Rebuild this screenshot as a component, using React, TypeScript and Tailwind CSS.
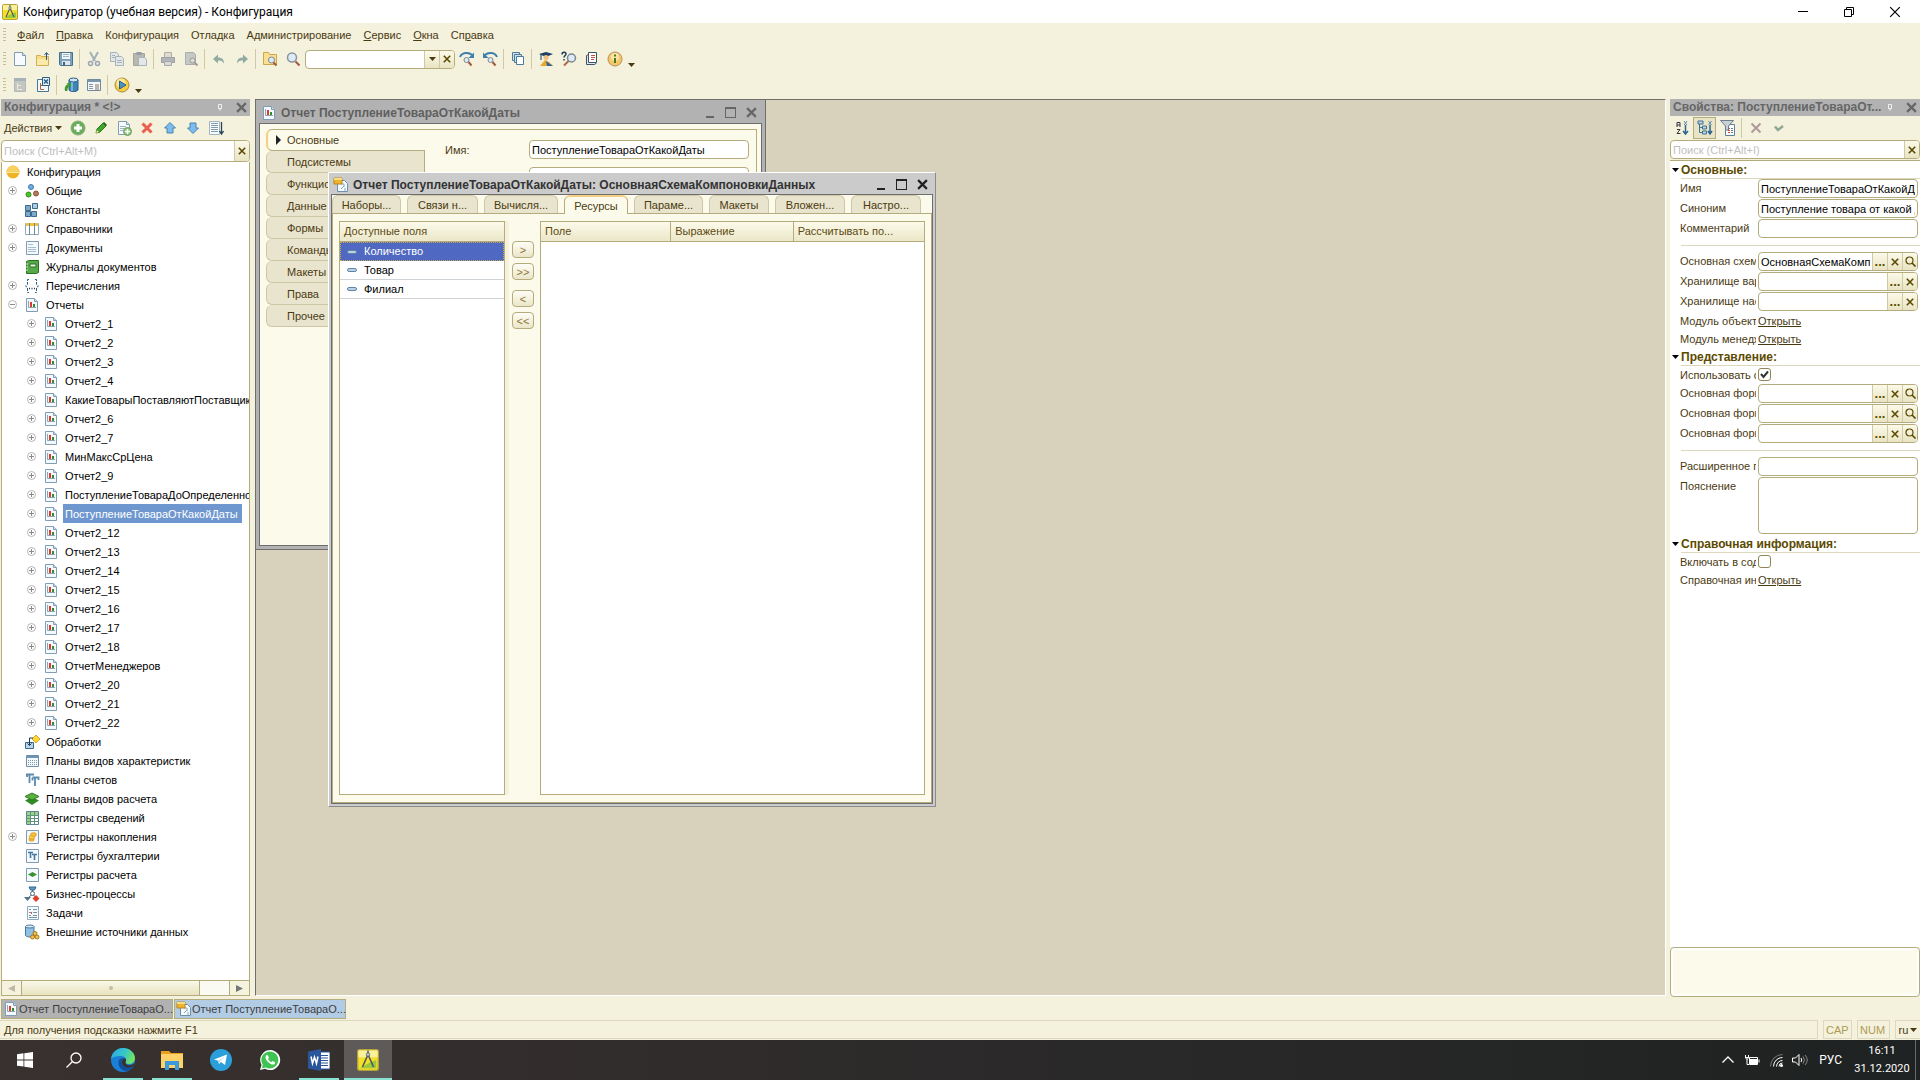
import type { ReactNode } from "react";

const font =
  "font-['Liberation_Sans',Arial,sans-serif] text-[11px] leading-[16px]";

/* ---------- icons ---------- */

type IconProps = { children: ReactNode; size?: number; view?: number };

function Svg({ children, size = 16, view = 16 }: IconProps) {
  return (
    <svg
      aria-hidden="true"
      className="block shrink-0"
      fill="none"
      height={size}
      viewBox={`0 0 ${view} ${view}`}
      width={size}
    >
      {children}
    </svg>
  );
}

function PageShape({ stroke = "#7f9cb3", fill = "#f7fbff" }) {
  return (
    <>
      <path d="M2.5 1.5h8l3 3v10h-11z" fill={fill} stroke={stroke} />
      <path d="M10.5 1.5v3h3" fill="#cfdfec" stroke={stroke} />
    </>
  );
}

const icons: Record<string, ReactNode> = {
  new: <PageShape />,
  open: (
    <>
      <path d="M1.5 4.5h4l1 1h7v9h-12z" fill="#f7dc86" stroke="#d4ae56" />
      <path d="M2 8h11v6H2z" fill="#fbe9a9" />
      <path d="M11.500 9V2M9.500 4l2-2.500 2 2.500" stroke="#2c5876" />
    </>
  ),
  save: (
    <>
      <path d="M1.500 1.500h13v13h-12l-1-1z" fill="#7ea2bd" stroke="#4a708c" />
      <path d="M4 2h8v6H4z" fill="#f3f7fa" />
      <path d="M5 3.500h6M5 5.500h6" stroke="#9db4c5" />
      <path d="M4 10h8v4H4z" fill="#dfe7ec" />
      <path d="M5 11h2v3H5z" fill="#3d6481" />
    </>
  ),
  cut: (
    <>
      <path d="M4 1l5 9M12 1L7 10" stroke="#a3b0ba" strokeWidth="2" />
      <circle cx="4.500" cy="12.500" r="2" stroke="#98a7b3" strokeWidth="1.500" />
      <circle cx="11.500" cy="12.500" r="2" stroke="#98a7b3" strokeWidth="1.500" />
    </>
  ),
  copy: (
    <>
      <path d="M1.500 1.500h6l2 2v7h-8z" fill="#e3e7e6" stroke="#a5b3bd" />
      <path d="M6.500 5.500h6l2 2v7h-8z" fill="#e3e7e6" stroke="#a5b3bd" />
      <path d="M8 9.500h5M8 11.500h5M3 4.500h3M3 6.500h3" stroke="#a5b3bd" />
    </>
  ),
  paste: (
    <>
      <path d="M1.500 2.500h11v12h-11z" fill="#b9b8ae" stroke="#a5a59d" />
      <path d="M4.500 1h5v3h-5z" fill="#93a0a8" />
      <path d="M6.500 6.500h6l2 2v6h-8z" fill="#e3e7e6" stroke="#a5b3bd" />
    </>
  ),
  print: (
    <>
      <path d="M4.500 1.500h7v5h-7z" fill="#dddcd2" stroke="#b0afa6" />
      <path d="M1.500 6.500h13v5h-13z" fill="#b3b5b6" stroke="#9ea2a5" />
      <path d="M4.500 10.500h7v4h-7z" fill="#dadbd6" stroke="#a5a8a8" />
    </>
  ),
  preview: (
    <>
      <path d="M2.500 1.500h8l2 2v10h-10z" fill="#c6c8c5" stroke="#a9adae" />
      <circle cx="9.500" cy="9.500" fill="#dadbd6" r="2.500" stroke="#9c9a97" />
      <path d="M11.500 11.500l3 3" stroke="#a79890" strokeWidth="2" />
    </>
  ),
  undo: (
    <path d="M2 8l5-4.500v3c4 0 6 2 6 6-1.500-2.500-3-3-6-3v3z" fill="#91aaa2" />
  ),
  redo: (
    <path d="M14 8L9 3.500v3c-4 0-6 2-6 6 1.500-2.500 3-3 6-3v3z" fill="#91aaa2" />
  ),
  findAll: (
    <>
      <path d="M1.500 1.500h5l1 2h7v10h-13z" fill="#f9e090" stroke="#cfa64c" />
      <circle cx="9.500" cy="9" fill="#dcebf5" r="3" stroke="#7c8795" />
      <path d="M11.500 11.500l3 3" stroke="#a3593c" strokeWidth="2" />
    </>
  ),
  find: (
    <>
      <circle cx="7" cy="6.500" fill="#dcebf5" r="4.500" stroke="#8a93a0" strokeWidth="1.500" />
      <path d="M10.500 10.500l4 4" stroke="#a3593c" strokeWidth="2" />
    </>
  ),
  findNext: (
    <>
      <path d="M1 6c2-5 9-5 12-2" stroke="#3b7fae" strokeWidth="2" />
      <path d="M15 1.500V7H9.500z" fill="#3b7fae" />
      <circle cx="7.500" cy="9" fill="#dcebf5" r="2.500" stroke="#7c8795" />
      <path d="M9.500 11l3 3.500" stroke="#a3593c" strokeWidth="2" />
    </>
  ),
  findPrev: (
    <>
      <path d="M15 6C13 1 6 1 3 4" stroke="#3b7fae" strokeWidth="2" />
      <path d="M1 1.500V7h5.500z" fill="#3b7fae" />
      <circle cx="8.500" cy="9" fill="#dcebf5" r="2.500" stroke="#7c8795" />
      <path d="M10.500 11l3 3.500" stroke="#a3593c" strokeWidth="2" />
    </>
  ),
  windows: (
    <>
      <path d="M2.500 1.500h7v8h-7z" fill="#cfe0ec" stroke="#4f7b9b" />
      <path d="M4.500 3.500h7v8h-7z" fill="#cfe0ec" stroke="#4f7b9b" />
      <path d="M6.500 5.500h7v8h-7z" fill="#fff" stroke="#4f7b9b" />
    </>
  ),
  syntax: (
    <>
      <path d="M1 3l7-2 7 2-7 3z" fill="#1d3f63" />
      <circle cx="8" cy="6.500" fill="#f0bd83" r="2.500" />
      <path d="M3 3v6" stroke="#1d3f63" />
      <path d="M2 15l5-6 4 2 4 4z" fill="#e8a62d" />
      <path d="M8 10l7 5H9z" fill="#2b6794" />
    </>
  ),
  help: (
    <>
      <circle cx="10.500" cy="7" fill="#dcebf5" r="4" stroke="#7c8795" strokeWidth="1.500" />
      <path d="M7.500 10l-4.500 4.500" stroke="#b06a4c" strokeWidth="2" />
      <path d="M1 3.500C1 .500 5 .500 5 3c0 1.500-2 1.500-2 3.500M3 8v1.500" stroke="#1f3e57" strokeWidth="1.500" />
    </>
  ),
  book: (
    <>
      <path d="M4.500 3.500l-2 1v9h8l2-1.500" fill="#dfe7ec" stroke="#3c5468" />
      <path d="M4.500 1.500h8v10h-8z" fill="#fff" stroke="#3c5468" />
      <path d="M7 4.500h4M7 6.500h4M7 8.500h3" stroke="#c94f3d" />
    </>
  ),
  info: (
    <>
      <circle cx="8" cy="8" fill="#f6c667" r="7" stroke="#b59261" />
      <circle cx="8" cy="6" fill="#fbe3a8" r="4" />
      <path d="M8 7v5M8 3.500v2" stroke="#3f7d22" strokeWidth="2" />
    </>
  ),
  treeOff: (
    <>
      <path d="M2.500 1.500h11v13h-11z" fill="#c4c6c1" stroke="#b3b8bb" />
      <path d="M2 1h12v3H2z" fill="#a8b2b9" />
      <path d="M5.500 6v6.500H10M5.500 8.500H9" stroke="#ece9dc" />
    </>
  ),
  treeOn: (
    <>
      <path d="M2.500 2.500h11v12h-11z" fill="#f3f8fb" stroke="#4b7696" />
      <path d="M5.500 6v6.500H9M5.500 8.500H8" stroke="#b4634a" />
      <path d="M7.500.500h7v8h-7z" fill="#e6eff6" stroke="#2d5f86" />
      <path d="M9 2.500l4 4m0-4l-4 4" stroke="#2d5f86" strokeWidth="1.500" />
    </>
  ),
  db: (
    <>
      <path d="M6 3v10c1.500 2 7.500 2 9 0V3z" fill="#3f86b8" stroke="#285c84" />
      <ellipse cx="10.500" cy="3" fill="#cbe3f3" rx="4.500" ry="2" stroke="#285c84" />
      <path d="M9 5v9" stroke="#8dc3e6" strokeWidth="1.500" />
      <path d="M2 14c-1-4 1-6 3-7l-2-1h5v5l-1.500-2C5 10 4 12 4.500 14z" fill="#3f9a36" />
    </>
  ),
  form: (
    <>
      <path d="M1.500 2.500h13v11h-13z" fill="#f4f7f9" stroke="#6f8b9d" />
      <path d="M2 3h12v2H2z" fill="#7897ac" />
      <path d="M3 7.500h4M3 9.500h4M3 11.500h4" stroke="#8a9aa5" />
      <path d="M9 7h4v6H9z" fill="#bdb6a8" />
    </>
  ),
  run: (
    <>
      <circle cx="8" cy="8" fill="#f9cd3e" r="7" stroke="#a88a46" />
      <circle cx="7" cy="6" fill="#fdea9b" r="4.500" />
      <path d="M5.500 4l6.500 4-6.500 4z" fill="#4b93c7" stroke="#2a618f" />
    </>
  ),
  add: (
    <>
      <circle cx="8" cy="8" fill="#67b056" r="7" stroke="#8aa884" />
      <path d="M8 4v8M4 8h8" stroke="#fff" strokeWidth="3" />
    </>
  ),
  edit: (
    <>
      <path d="M3 13l1-4 6-6 3 3-6 6z" fill="#3fa629" stroke="#2f7a20" />
      <path d="M10 3l1-1 3 3-1 1z" fill="#1e5d14" />
      <path d="M3 13l1-3 2 2z" fill="#f2dfa4" />
    </>
  ),
  addCopy: (
    <>
      <PageShape />
      <path d="M4 6.500h6M4 8.500h4M4 10.500h3" stroke="#9fb5c4" />
      <circle cx="11.500" cy="11.500" fill="#8bc47b" r="4" stroke="#6f9d63" />
      <path d="M11.500 9v5M9 11.500h5" stroke="#fff" strokeWidth="1.500" />
    </>
  ),
  remove: (
    <path d="M3.500 3.500l9 9M12.500 3.500l-9 9" stroke="#ea5f4d" strokeWidth="3" />
  ),
  up: (
    <path d="M8 2.500l5.500 5.500H11v5H5V8H2.500z" fill="#7dbcec" stroke="#4a84b0" />
  ),
  down: (
    <path d="M8 13.500L13.500 8H11V3H5v5H2.500z" fill="#7dbcec" stroke="#4a84b0" />
  ),
  sort: (
    <>
      <path d="M1.500 1.500h10v13h-10z" fill="#f7fbff" stroke="#9fb5c4" />
      <path d="M3 3.500h7M3 5.500h7M3 7.500h7M3 9.500h7M3 11.500h7" stroke="#8299a9" />
      <path d="M13.500 2v11M11.500 11l2 3 2-3" stroke="#26465c" strokeWidth="1.300" />
    </>
  ),
  root: (
    <>
      <circle cx="8" cy="8" fill="#f0b323" r="6.500" />
      <path d="M1.500 8a6.500 6.500 0 0113 0z" fill="#f7d263" />
      <path d="M1.500 8.500h13" stroke="#fbe9a0" />
    </>
  ),
  common: (
    <>
      <circle cx="7" cy="4" fill="#6fb0e6" r="2.500" stroke="#3c78ab" />
      <circle cx="4.500" cy="11.500" fill="#4fc32c" r="2.500" stroke="#2f8a18" />
      <circle cx="12" cy="10.500" fill="#b27a57" r="2.500" stroke="#8a5637" />
    </>
  ),
  constants: (
    <>
      <path d="M1.500 3.500h5v5h-5zM1.500 9.500h5v5h-5zM7.500 9.500h5v5h-5z" fill="#7ea9c9" stroke="#3b6a8f" />
      <path d="M8.500 1.500h5v5h-5z" fill="#a9cbe2" stroke="#3b6a8f" />
    </>
  ),
  catalogs: (
    <>
      <path d="M1.500 2.500h13v11h-13z" fill="#fff" stroke="#8fa9bd" />
      <path d="M2 2h12v3H2z" fill="#f2c23c" />
      <path d="M5.500 2v12M10.500 2v12" stroke="#6c8ba4" />
    </>
  ),
  documents: (
    <>
      <path d="M2.500 1.500h12v13h-12z" fill="#f3f9fd" stroke="#7f9cb3" />
      <path d="M4 4.500h5M4 7.500h8M4 9.500h8M4 11.500h8" stroke="#a5bfd1" />
    </>
  ),
  journals: (
    <>
      <path d="M2.500 2.500l2-1h10v12l-2 1h-10z" fill="#55a948" stroke="#2b7027" />
      <path d="M6 5h6v3H6z" fill="#e9f5e2" stroke="#2b7027" />
      <path d="M2 5h2M2 8h2M2 11h2" stroke="#d7efd0" />
    </>
  ),
  enums: (
    <>
      <path d="M5 1.500H3.500v5l-2 1.500 2 1.500v5H5M11 1.500h1.500v5l2 1.500-2 1.500v5H11" stroke="#315f80" strokeDasharray="3 1" />
      <path d="M5 10.500h1M7.500 10.500h1M10 10.500h1" stroke="#1d3a50" strokeWidth="1.500" />
    </>
  ),
  report: (
    <>
      <path d="M2.500 1.500h8l3 3v10h-11z" fill="#f3f9fd" stroke="#7f9db4" />
      <path d="M10.500 1.500v3h3" fill="#cfdfec" stroke="#7f9db4" />
      <path d="M4.500 4v6.500H12" stroke="#8ba3b4" />
      <path d="M6 5h2v5H6z" fill="#e0382c" />
      <path d="M9 7h2v3H9z" fill="#2c8f2c" />
    </>
  ),
  scheme: (
    <>
      <path d="M4.500 3.500h7l3 3v8h-10z" fill="#f3f9fd" stroke="#6d8fa8" />
      <path d="M8 7h3v3m1 1v3M8 12l3-3" stroke="#8ba6b8" />
      <path d="M1 1h8v6H1z" fill="#efb32c" stroke="#b98522" />
      <path d="M1 1h8v2H1z" fill="#f9dd83" />
    </>
  ),
  processing: (
    <>
      <path d="M1.500 8.500h8v6h-8z" fill="#b5d6ec" stroke="#3b6a8f" />
      <path d="M12 1l4 4-4 4-4-4z" fill="#fbd63b" stroke="#d8a51f" />
      <path d="M9 4H5.500v7M3.500 9.500l2 2 2-2" stroke="#1d3a50" />
    </>
  ),
  charTypes: (
    <>
      <path d="M2.500 2.500h12v11h-12z" fill="#f3f9fd" stroke="#6d8fa8" />
      <path d="M3 3h11v2H3z" fill="#6d94b2" />
      <path d="M4 7.500h9M4 9.500h9M4 11.500h9" stroke="#8496a3" strokeDasharray="1 1" />
    </>
  ),
  accounts: (
    <path d="M2 2.500h8M5.500 2.500V11M3 5V2M8.500 5.500h6V8M11 6v8M8.500 5.500v3" stroke="#5b8bae" strokeWidth="1.800" />
  ),
  calcTypes: (
    <>
      <path d="M8 6l7 3.500L8 14 1 9.500z" fill="#2f8a25" />
      <path d="M8 2l7 3.500L8 9 1 5.500z" fill="#5ab13f" stroke="#2c7a22" />
    </>
  ),
  infoReg: (
    <>
      <path d="M2.500 1.500h12v13h-12z" fill="#fff" stroke="#5d8299" />
      <path d="M3 2h11v3H3zM3 5h3v9H3z" fill="#9ed288" />
      <path d="M2.500 5.500h12M2.500 8.500h12M2.500 11.500h12M6.500 1.500v13M10.500 1.500v13" stroke="#5f967a" />
    </>
  ),
  accumReg: (
    <>
      <path d="M2.500 1.500h12v13h-12z" fill="#f3f9fd" stroke="#7f9cb3" />
      <ellipse cx="7.500" cy="10.500" fill="#eeb02a" rx="3" ry="2" />
      <ellipse cx="8" cy="8" fill="#f9cf4e" rx="3" ry="2" stroke="#c98a1c" strokeWidth=".5" />
      <ellipse cx="9.500" cy="5.500" fill="#f5be37" rx="3" ry="2" stroke="#c98a1c" strokeWidth=".5" />
    </>
  ),
  accountReg: (
    <>
      <path d="M2.500 1.500h12v13h-12z" fill="#f3f9fd" stroke="#7f9cb3" />
      <path d="M4 4.500h5M6.500 4.500V10M8 6.500h5M10.500 6.500V12" stroke="#42789f" strokeWidth="1.600" />
    </>
  ),
  calcReg: (
    <>
      <path d="M2.500 1.500h12v13h-12z" fill="#f3f9fd" stroke="#7f9cb3" />
      <path d="M8.500 5l4.500 2.500-4.500 2.500L4 7.500z" fill="#3b9130" />
    </>
  ),
  business: (
    <>
      <path d="M5 1h7l-1.500 3h-4z" fill="#5d9ccb" stroke="#2f668f" />
      <path d="M8.500 4v2M8.500 8L4 12M8.500 8l4 4" stroke="#506878" />
      <circle cx="8.500" cy="7.500" fill="#fff" r="2" stroke="#506878" />
      <path d="M0 11h7l-3.500 4z" fill="#51748c" />
      <path d="M12 9l3.500 3.500L12 16l-3.500-3.500z" fill="#e0402d" />
    </>
  ),
  tasks: (
    <>
      <path d="M3.500 1.500h11v13h-11z" fill="#f3f9fd" stroke="#8fa9bd" />
      <path d="M5 4.500h2M5 7.500h2M5 10.500h2M9 4.500h4M9 7.500h4M9 10.500h4M5 12.500h8" stroke="#7d909e" />
      <path d="M7.500 7v2" stroke="#d65a46" />
    </>
  ),
  external: (
    <>
      <path d="M1.500 2.500v9c1.500 2 7 2 8.500 0v-9z" fill="#8fc0e2" stroke="#47799d" />
      <ellipse cx="5.800" cy="2.500" fill="#d6eaf7" rx="4.300" ry="1.500" stroke="#47799d" />
      <circle cx="11" cy="9.500" fill="#f3c351" r="2" stroke="#a67518" />
      <circle cx="8.500" cy="13" fill="#f3c351" r="2" stroke="#a67518" />
      <circle cx="13" cy="13" fill="#f3c351" r="2" stroke="#a67518" />
    </>
  ),
  az: (
    <>
      <path d="M3 7V2.500h3V7M3 5h3M3 9.500h3l-3 4h3.500" stroke="#33373a" />
      <path d="M11.500 5v8M9 11l2.500 3 2.500-3" stroke="#2c6690" strokeWidth="1.500" />
      <path d="M10 1l3 4m0-4l-3 4" stroke="#5f8cab" />
    </>
  ),
  categories: (
    <>
      <path d="M2.500 2v10.500H5M2.500 7.500H5" stroke="#3f7396" />
      <path d="M5.500 6h4v3h-4zM5.500 11h4v3h-4zM1 1h5v3H1z" fill="#bcd3e2" stroke="#3f7396" />
      <path d="M13 5v8M11 11l2 3 2-3" stroke="#2c6690" strokeWidth="1.500" />
      <path d="M11.500 1l3 4m0-4l-3 4" stroke="#5f8cab" />
    </>
  ),
  filter: (
    <>
      <path d="M5.500 4.500h9v11h-9z" fill="#fff" stroke="#5d8299" />
      <path d="M8 8.500h2M8 10.500h2M8 12.500h2" stroke="#d5482f" />
      <path d="M11 8.500h2M11 10.500h2M11 12.500h2" stroke="#5d8299" />
      <path d="M.500.500h13L8.500 6v4h-3V6z" fill="#c9d1d6" stroke="#6b7f8c" />
    </>
  ),
  cancel: (
    <path d="M3.500 3.500l9 9M12.500 3.500l-9 9" stroke="#b09a9c" strokeWidth="2" />
  ),
  apply: <path d="M4 6.500l3 3.500 5-4" stroke="#8fa893" strokeWidth="2.500" />,
  app: (
    <>
      <rect fill="#f4df2a" height="15" rx="1.500" stroke="#b3a23a" width="15" x=".5" y=".5" />
      <path d="M1 1h14v5H1z" fill="#fbf19a" />
      <path d="M2 14l7-4 5-2v6z" fill="#9cc83c" />
      <path d="M8 1v3L4 13M8 4l4 9" stroke="#4c565f" strokeWidth="1.100" />
      <circle cx="8" cy="4" fill="#cfd5d8" r="1.200" stroke="#4c565f" strokeWidth=".6" />
    </>
  ),
};

function Icon({ name, size = 16 }: { name: string; size?: number }) {
  return <Svg size={size}>{icons[name]}</Svg>;
}

function Cross({ size = 10, className = "text-[#5c4a00]", width = 2 }) {
  return (
    <svg aria-hidden="true" className={`block shrink-0 ${className}`} height={size} viewBox="0 0 10 10" width={size}>
      <path d="M1 1l8 8M9 1L1 9" stroke="currentColor" strokeWidth={width} />
    </svg>
  );
}

function Caret({ className = "text-[#4a3a12]" }) {
  return (
    <svg aria-hidden="true" className={`block shrink-0 ${className}`} height="4" viewBox="0 0 7 4" width="7">
      <path d="M0 0h7L3.500 4z" fill="currentColor" />
    </svg>
  );
}

/* ---------- small parts ---------- */

function ToolButton({ icon, label, pressed = false }: { icon: string; label: string; pressed?: boolean }) {
  return (
    <button
      aria-label={label}
      className={`grid h-[22px] w-[23px] shrink-0 place-items-center ${
        pressed ? "border border-[#b5ac7d] bg-[#e9e4c6]" : ""
      }`}
      type="button"
    >
      <Icon name={icon} />
    </button>
  );
}

function Separator() {
  return <span className="mx-[2px] h-5 w-px shrink-0 bg-[#cfc9a4]" />;
}

function Grip() {
  return (
    <span className="mr-[2px] ml-[3px] h-[14px] w-[3px] shrink-0 bg-[repeating-linear-gradient(to_bottom,#c5be98_0px,#c5be98_1px,transparent_1px,transparent_3px)]" />
  );
}

function FieldButton({ children, label }: { children: ReactNode; label: string }) {
  return (
    <button
      aria-label={label}
      className="grid w-[15px] shrink-0 place-items-center border-l border-[#cfc9a4] bg-linear-to-b from-[#fbfae9] to-[#e9e4c3] text-[13px] font-bold text-[#5c4a00]"
      type="button"
    >
      {children}
    </button>
  );
}

const fieldBox =
  "flex overflow-hidden rounded-[4px] border border-[#b5ac7d] bg-white";

/* ---------- top bars ---------- */

const menu: [string, string, string][] = [
  ["", "Ф", "айл"],
  ["", "П", "равка"],
  ["Конфигурация", "", ""],
  ["Отладка", "", ""],
  ["Администрирование", "", ""],
  ["", "С", "ервис"],
  ["", "О", "кна"],
  ["Сп", "р", "авка"],
];

function TitleBar() {
  return (
    <header className="flex h-[23px] shrink-0 items-center bg-white pr-[2px] pl-[2px] font-[Roboto,'Noto_Sans',sans-serif] text-[12px] text-black">
      <Icon name="app" />
      <h1 className="ml-[5px] grow whitespace-nowrap">
        Конфигуратор (учебная версия) - Конфигурация
      </h1>
      <button aria-label="Свернуть" className="grid h-full w-[46px] place-items-center" type="button">
        <span className="h-px w-[10px] bg-black" />
      </button>
      <button aria-label="Восстановить" className="grid h-full w-[46px] place-items-center" type="button">
        <svg fill="none" height="10" viewBox="0 0 10 10" width="10">
          <path d="M.5 2.500h7v7h-7zM2.500 2.500v-2h7v7h-2" stroke="#000" />
        </svg>
      </button>
      <button aria-label="Закрыть" className="grid h-full w-[46px] place-items-center" type="button">
        <Cross className="text-black" size={12} width={1} />
      </button>
    </header>
  );
}

function TopBars() {
  return (
    <>
      <nav className="flex h-6 shrink-0 items-center text-[#4a3a12]">
        <Grip />
        <ul className="ml-[9px] flex gap-[12px]">
          {menu.map(([before, key, after]) => (
            <li key={before + key + after}>
              <button className="whitespace-nowrap" type="button">
                {before}
                <u>{key}</u>
                {after}
              </button>
            </li>
          ))}
        </ul>
      </nav>
      <div className="flex h-6 shrink-0 items-center" role="toolbar">
        <Grip />
        <ToolButton icon="new" label="Новый документ" />
        <ToolButton icon="open" label="Открыть" />
        <ToolButton icon="save" label="Сохранить" />
        <Separator />
        <ToolButton icon="cut" label="Вырезать" />
        <ToolButton icon="copy" label="Копировать" />
        <ToolButton icon="paste" label="Вставить" />
        <Separator />
        <ToolButton icon="print" label="Печать" />
        <ToolButton icon="preview" label="Просмотр" />
        <Separator />
        <ToolButton icon="undo" label="Отменить" />
        <ToolButton icon="redo" label="Вернуть" />
        <Separator />
        <ToolButton icon="findAll" label="Глобальный поиск" />
        <ToolButton icon="find" label="Найти" />
        <div className={`${fieldBox} ml-px h-[19px] w-[150px]`}>
          <input aria-label="Строка поиска" className="min-w-0 grow px-1 outline-none" type="text" />
          <FieldButton label="Список">
            <Caret />
          </FieldButton>
          <FieldButton label="Очистить">
            <Cross size={8} />
          </FieldButton>
        </div>
        <ToolButton icon="findNext" label="Найти следующий" />
        <ToolButton icon="findPrev" label="Найти предыдущий" />
        <Separator />
        <ToolButton icon="windows" label="Окна" />
        <Separator />
        <ToolButton icon="syntax" label="Синтакс-помощник" />
        <ToolButton icon="help" label="Поиск в справке" />
        <ToolButton icon="book" label="Содержание справки" />
        <ToolButton icon="info" label="О программе" />
        <span className="mt-3 ml-[2px]">
          <Caret />
        </span>
      </div>
      <div className="flex h-[27px] shrink-0 items-center" role="toolbar">
        <Grip />
        <ToolButton icon="treeOff" label="Открыть конфигурацию" />
        <ToolButton icon="treeOn" label="Закрыть конфигурацию" />
        <Separator />
        <ToolButton icon="db" label="Обновить базу данных" />
        <ToolButton icon="form" label="Конфигурация базы данных" />
        <Separator />
        <ToolButton icon="run" label="Начать отладку" />
        <span className="mt-3 ml-[2px]">
          <Caret />
        </span>
      </div>
    </>
  );
}

function PanelHeader({ title }: { title: string }) {
  return (
    <div className="flex h-[17px] shrink-0 items-center bg-[#b2b2b2] px-[3px] text-[12px] leading-[15px] font-bold text-[#666]">
      <h2 className="min-w-0 grow whitespace-nowrap">{title}</h2>
      <button aria-label="Закрепить" className="mr-[10px] grid h-full w-3 shrink-0 place-items-center" type="button">
        <svg fill="none" height="8" viewBox="0 0 6 8" width="6">
          <path d="M1.500.500h3v4h-3zM1 4.500h4M3 4.500V7" stroke="#f0f0f0" />
        </svg>
      </button>
      <button aria-label="Закрыть панель" type="button">
        <Cross className="text-[#666]" size={11} />
      </button>
    </div>
  );
}

/* ---------- configuration tree ---------- */

type Node = { text: string; icon: string; level: number; sign?: "+" | "-"; selected?: boolean };

const reports = [
  "Отчет2_1",
  "Отчет2_2",
  "Отчет2_3",
  "Отчет2_4",
  "КакиеТоварыПоставляютПоставщики",
  "Отчет2_6",
  "Отчет2_7",
  "МинМаксСрЦена",
  "Отчет2_9",
  "ПоступлениеТовараДоОпределеннойДаты",
  "ПоступлениеТовараОтКакойДаты",
  "Отчет2_12",
  "Отчет2_13",
  "Отчет2_14",
  "Отчет2_15",
  "Отчет2_16",
  "Отчет2_17",
  "Отчет2_18",
  "ОтчетМенеджеров",
  "Отчет2_20",
  "Отчет2_21",
  "Отчет2_22",
];

const nodes: Node[] = [
  { text: "Конфигурация", icon: "root", level: 0 },
  { text: "Общие", icon: "common", level: 1, sign: "+" },
  { text: "Константы", icon: "constants", level: 1 },
  { text: "Справочники", icon: "catalogs", level: 1, sign: "+" },
  { text: "Документы", icon: "documents", level: 1, sign: "+" },
  { text: "Журналы документов", icon: "journals", level: 1 },
  { text: "Перечисления", icon: "enums", level: 1, sign: "+" },
  { text: "Отчеты", icon: "report", level: 1, sign: "-" },
  ...reports.map((text): Node => ({
    text,
    icon: "report",
    level: 2,
    sign: "+",
    selected: text === "ПоступлениеТовараОтКакойДаты",
  })),
  { text: "Обработки", icon: "processing", level: 1 },
  { text: "Планы видов характеристик", icon: "charTypes", level: 1 },
  { text: "Планы счетов", icon: "accounts", level: 1 },
  { text: "Планы видов расчета", icon: "calcTypes", level: 1 },
  { text: "Регистры сведений", icon: "infoReg", level: 1 },
  { text: "Регистры накопления", icon: "accumReg", level: 1, sign: "+" },
  { text: "Регистры бухгалтерии", icon: "accountReg", level: 1 },
  { text: "Регистры расчета", icon: "calcReg", level: 1 },
  { text: "Бизнес-процессы", icon: "business", level: 1 },
  { text: "Задачи", icon: "tasks", level: 1 },
  { text: "Внешние источники данных", icon: "external", level: 1 },
];

const indents = ["pl-[3px]", "pl-[6px]", "pl-[25px]"];

function TreeRow({ node }: { node: Node }) {
  return (
    <li className={`flex h-[19px] items-center ${indents[node.level]}`}>
      {node.level > 0 && (
        <span className="mr-[7px] grid w-[9px] shrink-0 place-items-center">
          {node.sign && (
            <svg fill="none" height="9" viewBox="0 0 9 9" width="9">
              <circle cx="4.500" cy="4.500" r="4" stroke="#b5b5b5" />
              <path d={node.sign === "+" ? "M2 4.500h5M4.500 2v5" : "M2 4.500h5"} stroke="#8a8a8a" />
            </svg>
          )}
        </span>
      )}
      <Icon name={node.icon} />
      <span
        className={`ml-[4px] h-full px-[2px] leading-[20px] whitespace-nowrap ${
          node.selected ? "bg-[#6f97cf] pr-[4px] text-white" : "text-black"
        }`}
      >
        {node.text}
      </span>
    </li>
  );
}

function TreePanel() {
  return (
    <aside className="flex w-[250px] shrink-0 flex-col pl-px">
      <PanelHeader title="Конфигурация * <!>" />
      <div className="flex h-6 shrink-0 items-center pl-[3px]" role="toolbar">
        <button className="mr-[4px] flex items-center gap-[3px] text-[#4a3a12]" type="button">
          Действия <Caret />
        </button>
        <ToolButton icon="add" label="Добавить" />
        <ToolButton icon="edit" label="Изменить" />
        <ToolButton icon="addCopy" label="Добавить копированием" />
        <ToolButton icon="remove" label="Удалить" />
        <ToolButton icon="up" label="Переместить вверх" />
        <ToolButton icon="down" label="Переместить вниз" />
        <ToolButton icon="sort" label="Сортировать" />
      </div>
      <div className={`${fieldBox} h-[22px] shrink-0`}>
        <input
          aria-label="Поиск"
          className="min-w-0 grow px-[2px] outline-none placeholder:text-[#c0c0c0]"
          placeholder="Поиск (Ctrl+Alt+M)"
          type="text"
        />
        <FieldButton label="Очистить поиск">
          <Cross size={8} />
        </FieldButton>
      </div>
      <ul className="min-h-0 grow overflow-hidden border-x border-[#b5ac7d] bg-white">
        {nodes.map((node) => (
          <TreeRow key={node.text} node={node} />
        ))}
      </ul>
      <div className="flex h-4 shrink-0 border border-[#b5ac7d] bg-[#faf9f2]">
        <button aria-label="Прокрутить влево" className="grid w-[19px] place-items-center bg-[#f5f2dd] text-[#bbb8a6]" type="button">
          <svg height="7" viewBox="0 0 7 7" width="7">
            <path d="M7 0v7L0 3.500z" fill="currentColor" />
          </svg>
        </button>
        <span className="grid w-[179px] place-items-center border-x border-[#b5ac7d] bg-linear-to-b from-[#faf8e8] to-[#e8e2bf]">
          <span className="size-1 rounded-full bg-[#c5bf9e]" />
        </span>
        <span className="grow" />
        <button aria-label="Прокрутить вправо" className="grid w-5 place-items-center border-l border-[#b5ac7d] bg-[#f5f2dd] text-[#777]" type="button">
          <svg height="7" viewBox="0 0 7 7" width="7">
            <path d="M0 0v7l7-3.500z" fill="currentColor" />
          </svg>
        </button>
      </div>
    </aside>
  );
}

/* ---------- windows ---------- */

function WindowButtons({ className }: { className: string }) {
  return (
    <div className={`flex h-full items-center ${className}`}>
      <button aria-label="Свернуть окно" className="grid h-full w-[20px] place-items-center" type="button">
        <span className="mt-[9px] h-[2px] w-[8px] bg-current" />
      </button>
      <button aria-label="Развернуть окно" className="grid h-full w-[20px] place-items-center" type="button">
        <span className="size-[11px] border border-t-2 border-current" />
      </button>
      <button aria-label="Закрыть окно" className="grid h-full w-[22px] place-items-center" type="button">
        <Cross className={className} size={11} />
      </button>
    </div>
  );
}

const sideTabs = [
  "Основные",
  "Подсистемы",
  "Функциональные опции",
  "Данные",
  "Формы",
  "Команды",
  "Макеты",
  "Права",
  "Прочее",
];

function ReportWindow() {
  return (
    <section className="absolute top-0 left-0 isolate flex h-[450px] w-[510px] flex-col border-r border-b border-[#6e6e6e] bg-[#b2b2b2] px-[3px] pb-[3px]">
      <div className="flex h-[23px] shrink-0 items-center pt-[2px] pl-[2px] text-[12px] font-bold text-[#5f5f5f]">
        <Icon name="report" />
        <h2 className="ml-[4px] grow whitespace-nowrap">Отчет ПоступлениеТовараОтКакойДаты</h2>
        <WindowButtons className="text-[#666]" />
      </div>
      <div className="flex grow border border-[#6e6e6e] bg-[#fcfaeb] py-[5px] pr-[4px] pl-[6px]">
        <div className="z-10 -mr-px flex w-[159px] shrink-0 flex-col" role="tablist">
          {sideTabs.map((tab, index) => (
            <button
              aria-selected={index === 0}
              className={`flex h-[22px] items-center overflow-hidden rounded-l-[6px] border text-left whitespace-nowrap text-[#4a3a12] ${
                index === 0
                  ? "border-r-0 border-[#b5ac7d] border-l-[#f3cf85] border-l-2 bg-[#fcfaeb] pl-[8px]"
                  : "border-t-0 border-[#cdc7a5] border-r-[#b5ac7d] bg-[#e9e4cd] pl-[20px]"
              }`}
              key={tab}
              role="tab"
              type="button"
            >
              {index === 0 && (
                <svg className="mr-[6px]" height="10" viewBox="0 0 5 10" width="5">
                  <path d="M0 0l5 5-5 5z" fill="#222" />
                </svg>
              )}
              {tab}
            </button>
          ))}
        </div>
        <div className="flex grow flex-col gap-[8px] border border-[#b5ac7d] py-[10px] pr-[7px] pl-[20px] text-[#4a3a12]">
          <div className="flex items-center">
            <label className="w-[84px]" htmlFor="report-name">
              Имя:
            </label>
            <input
              className="h-[19px] min-w-0 grow rounded-[4px] border border-[#b5ac7d] bg-white px-[2px] text-black outline-none"
              defaultValue="ПоступлениеТовараОтКакойДаты"
              id="report-name"
              type="text"
            />
          </div>
          <div className="flex items-center">
            <label className="w-[84px]" htmlFor="report-synonym">
              Синоним:
            </label>
            <input
              className="h-[19px] min-w-0 grow rounded-[4px] border border-[#b5ac7d] bg-white px-[2px] text-black outline-none"
              id="report-synonym"
              type="text"
            />
          </div>
        </div>
      </div>
    </section>
  );
}

const topTabs = [
  { text: "Наборы...", width: "w-[69px]" },
  { text: "Связи н...", width: "w-[71px]" },
  { text: "Вычисля...", width: "w-[74px]" },
  { text: "Ресурсы", width: "w-[64px]" },
  { text: "Параме...", width: "w-[69px]" },
  { text: "Макеты", width: "w-[60px]" },
  { text: "Вложен...", width: "w-[70px]" },
  { text: "Настро...", width: "w-[70px]" },
];

const fields = ["Количество", "Товар", "Филиал"];

const headCell =
  "h-[20px] border-b border-[#b5ac7d] bg-linear-to-b from-[#fbfaea] to-[#ece7c9] px-[4px] pb-[2px] text-left font-normal text-[#5c4a12] whitespace-nowrap";

function MoveButton({ text, label }: { text: string; label: string }) {
  return (
    <button
      aria-label={label}
      className="h-[17px] w-[22px] rounded-[4px] border border-[#b5ac7d] bg-linear-to-b from-[#fefdf6] to-[#ebe6c8] text-center leading-[14px] text-[#8a7433]"
      type="button"
    >
      {text}
    </button>
  );
}

function SchemeWindow() {
  return (
    <section className="absolute top-[72px] left-[72px] isolate flex h-[635px] w-[608px] flex-col border border-t-white border-r-[#8c8c8c] border-b-[#8c8c8c] border-l-white bg-[#cbcbcb] px-[2px] pb-[2px]">
      <div className="flex h-[21px] shrink-0 items-center pt-[2px] pl-[2px] text-[12px] font-bold text-[#333]">
        <Icon name="scheme" />
        <h2 className="ml-[4px] grow whitespace-nowrap">
          Отчет ПоступлениеТовараОтКакойДаты: ОсновнаяСхемаКомпоновкиДанных
        </h2>
        <WindowButtons className="text-[#222]" />
      </div>
      <div className="flex min-h-0 grow flex-col border border-[#6e6e6e] bg-[#fcfaeb]">
        <div className="flex h-[19px] shrink-0 items-end gap-[6px] border-b border-[#b5ac7d]" role="tablist">
          {topTabs.map(({ text, width }) => (
            <button
              aria-selected={text === "Ресурсы"}
              className={`rounded-t-[6px] border border-b-0 text-center whitespace-nowrap text-[#4a3a12] ${width} ${
                text === "Ресурсы"
                  ? "-mb-px h-[19px] border-[#b5ac7d] border-t-[#f3cf85] border-t-2 bg-[#fcfaeb]"
                  : "h-[18px] border-[#cdc7a5] bg-[#e9e4cd]"
              }`}
              key={text}
              role="tab"
              type="button"
            >
              {text}
            </button>
          ))}
        </div>
        <div className="flex min-h-0 grow border-x border-b border-[#b5ac7d] px-[6px] pt-[7px] pb-[7px]">
          <div className="w-[166px] shrink-0 border border-[#b5ac7d] bg-white">
            <table className="w-full border-separate border-spacing-0">
              <thead>
                <tr>
                  <th className={headCell}>Доступные поля</th>
                </tr>
              </thead>
              <tbody>
                {fields.map((field, index) => (
                  <tr key={field}>
                    <td
                      className={`h-[19px] p-0 ${
                        index === 0
                          ? "border border-dotted border-[#c9a94a] bg-[#4f68c1] text-white"
                          : "border-b border-[#cdd3d6] text-black"
                      }`}
                    >
                      <div className={`flex items-center gap-[7px] leading-[17px] ${index === 0 ? "pl-[6px]" : "pl-[7px]"}`}>
                        <span className="h-[4px] w-[10px] rounded-[2px] border border-[#5f86a5] bg-[#b9d2e4]" />
                        {field}
                      </div>
                    </td>
                  </tr>
                ))}
              </tbody>
            </table>
          </div>
          <div className="w-[4px] shrink-0 bg-[#f5f1dc]" />
          <div className="flex w-[31px] shrink-0 flex-col gap-[10px] pt-[20px] pl-[3px]">
            <div className="flex flex-col gap-[5px]">
              <MoveButton label="Добавить" text=">" />
              <MoveButton label="Добавить все" text=">>" />
            </div>
            <div className="flex flex-col gap-[5px]">
              <MoveButton label="Удалить" text="<" />
              <MoveButton label="Удалить все" text="<<" />
            </div>
          </div>
          <div className="grow border border-[#b5ac7d] bg-white">
            <table className="w-full table-fixed border-separate border-spacing-0">
              <thead>
                <tr>
                  <th className={`${headCell} w-[34%] border-r`}>Поле</th>
                  <th className={`${headCell} w-[32%] border-r`}>Выражение</th>
                  <th className={headCell}>Рассчитывать по...</th>
                </tr>
              </thead>
            </table>
          </div>
        </div>
      </div>
    </section>
  );
}

/* ---------- properties ---------- */

function SectionTitle({ text }: { text: string }) {
  return (
    <h3 className="flex h-[18px] items-center pl-[2px] text-[12px] font-bold text-[#5c4a00]">
      <Caret className="mr-[2px] text-black" />
      <span className="h-full grow border-b border-[#dcd8bd] leading-[18px]">{text}</span>
    </h3>
  );
}

function Row({ id, label, children, height = "h-[20px]" }: { id: string; label: string; children: ReactNode; height?: string }) {
  return (
    <div className={`flex pl-[10px] ${height}`}>
      <label className="w-[76px] shrink-0 overflow-hidden leading-[18px] whitespace-nowrap text-[#4a3a12]" htmlFor={id}>
        {label}
      </label>
      <div className="ml-[2px] flex min-w-0 grow items-start pr-[2px]">{children}</div>
    </div>
  );
}

function TextField({ id, label, value, buttons = 0 }: { id: string; label: string; value?: string; buttons?: number }) {
  return (
    <Row id={id} label={label}>
      <div className={`${fieldBox} h-[19px] min-w-0 grow`}>
        <input className="min-w-0 grow px-[2px] text-black outline-none" defaultValue={value} id={id} type="text" />
        {buttons > 0 && <FieldButton label={`${label}: выбрать`}>...</FieldButton>}
        {buttons > 0 && (
          <FieldButton label={`${label}: очистить`}>
            <Cross size={8} />
          </FieldButton>
        )}
        {buttons > 2 && (
          <FieldButton label={`${label}: открыть`}>
            <svg fill="none" height="11" viewBox="0 0 11 11" width="11">
              <circle cx="4.500" cy="4.500" r="3.500" stroke="#5c4a00" strokeWidth="1.200" />
              <path d="M7 7l3.500 3.500" stroke="#5c4a00" strokeWidth="1.600" />
            </svg>
          </FieldButton>
        )}
      </div>
    </Row>
  );
}

function CheckField({ id, label, checked = false }: { id: string; label: string; checked?: boolean }) {
  return (
    <Row height="h-[18px]" id={id} label={label}>
      <input
        className="peer mt-[2px] size-[13px] appearance-none rounded-[3px] border border-[#8f8558] bg-white"
        defaultChecked={checked}
        id={id}
        type="checkbox"
      />
      <svg className="pointer-events-none mt-[4px] -ml-[11px] hidden peer-checked:block" fill="none" height="9" viewBox="0 0 9 9" width="9">
        <path d="M1 4l2.500 3L8 1.500" stroke="#333" strokeWidth="2" />
      </svg>
    </Row>
  );
}

function LinkField({ id, label }: { id: string; label: string }) {
  return (
    <Row height="h-[18px]" id={id} label={label}>
      <a className="leading-[18px] text-[#4a3a12] underline" href="#open" id={id}>
        Открыть
      </a>
    </Row>
  );
}

function Rule() {
  return (
    <div className="flex h-[13px] items-center pl-[11px]">
      <span className="h-px grow bg-[#dcd8bd]" />
    </div>
  );
}

function PropertiesPanel() {
  return (
    <aside className="flex w-[250px] shrink-0 flex-col">
      <PanelHeader title="Свойства: ПоступлениеТовараОт..." />
      <div className="flex h-6 shrink-0 items-center" role="toolbar">
        <ToolButton icon="az" label="По алфавиту" />
        <ToolButton icon="categories" label="По категориям" pressed />
        <ToolButton icon="filter" label="Отбор" />
        <Separator />
        <ToolButton icon="cancel" label="Отменить изменения" />
        <ToolButton icon="apply" label="Применить" />
      </div>
      <div className={`${fieldBox} h-[19px] shrink-0`}>
        <input
          aria-label="Поиск свойств"
          className="min-w-0 grow px-[2px] outline-none placeholder:text-[#c0c0c0]"
          placeholder="Поиск (Ctrl+Alt+I)"
          type="text"
        />
        <FieldButton label="Очистить поиск свойств">
          <Cross size={8} />
        </FieldButton>
      </div>
      <div className="mt-px min-h-0 grow overflow-hidden border-t border-[#b5ac7d] bg-white">
        <SectionTitle text="Основные:" />
        <TextField id="prop-name" label="Имя" value="ПоступлениеТовараОтКакойДаты" />
        <TextField id="prop-synonym" label="Синоним" value="Поступление товара от какой даты" />
        <TextField id="prop-comment" label="Комментарий" />
        <Rule />
        <TextField buttons={3} id="prop-scheme" label="Основная схема" value="ОсновнаяСхемаКомпоновкиДанных" />
        <TextField buttons={2} id="prop-variants" label="Хранилище вариантов" />
        <TextField buttons={2} id="prop-settings" label="Хранилище настроек" />
        <LinkField id="prop-object" label="Модуль объекта" />
        <LinkField id="prop-manager" label="Модуль менеджера" />
        <SectionTitle text="Представление:" />
        <CheckField checked id="prop-commands" label="Использовать стандартные команды" />
        <TextField buttons={3} id="prop-form" label="Основная форма" />
        <TextField buttons={3} id="prop-form-settings" label="Основная форма настроек" />
        <TextField buttons={3} id="prop-form-variant" label="Основная форма варианта" />
        <Rule />
        <TextField id="prop-extended" label="Расширенное представление" />
        <Row height="h-[58px]" id="prop-hint" label="Пояснение">
          <textarea
            className="h-[57px] min-w-0 grow resize-none rounded-[4px] border border-[#b5ac7d] bg-white px-[2px] outline-none"
            id="prop-hint"
          />
        </Row>
        <SectionTitle text="Справочная информация:" />
        <CheckField id="prop-contents" label="Включать в содержание" />
        <LinkField id="prop-help" label="Справочная информация" />
      </div>
      <div className="-mb-px h-[50px] shrink-0 rounded-[4px] border border-[#b5ac7d] bg-white p-[2px]">
        <div className="h-full bg-[#fcfaeb]" />
      </div>
    </aside>
  );
}

/* ---------- bottom bars ---------- */

function WindowTabs() {
  return (
    <div className="flex h-[24px] shrink-0 items-center gap-px pt-px pl-px text-[#3c3c3c]">
      <button className="flex h-[20px] w-[172px] items-center border border-[#b5ac7d] bg-[#b2b2b2] pl-px" type="button">
        <Icon name="report" />
        <span className="whitespace-nowrap">Отчет ПоступлениеТовараО...</span>
      </button>
      <button className="flex h-[20px] w-[172px] items-center border border-[#b5ac7d] bg-[#b3cce6] pl-px" type="button">
        <Icon name="scheme" />
        <span className="whitespace-nowrap">Отчет ПоступлениеТовараО...</span>
      </button>
    </div>
  );
}

function StatusBar() {
  return (
    <footer className="flex h-[20px] shrink-0 gap-[5px] pb-px text-[#4a3a12]">
      <p className="grow border border-l-0 border-[#dcd8bd] pl-[4px] leading-[18px]">
        Для получения подсказки нажмите F1
      </p>
      <span className="w-[29px] border border-[#dcd8bd] pl-[2px] leading-[18px] text-[#b09a55]">CAP</span>
      <span className="w-[33px] border border-[#dcd8bd] pl-[2px] leading-[18px] text-[#b09a55]">NUM</span>
      <button className="flex w-[25px] items-center justify-center gap-[2px] border border-r-0 border-[#dcd8bd]" type="button">
        ru <Caret />
      </button>
    </footer>
  );
}

const apps: { label: string; running?: boolean; active?: boolean; art: ReactNode }[] = [
  {
    label: "Пуск",
    art: (
      <svg height="16" viewBox="0 0 16 16" width="16">
        <path d="M0 2.200l6.500-.9v6.200H0zM7.300 1.200L16 0v7.500H7.300zM0 8.400h6.500v6.200L0 13.700zM7.300 8.400H16V16l-8.700-1.200z" fill="#fff" />
      </svg>
    ),
  },
  {
    label: "Поиск",
    art: (
      <svg fill="none" height="16" viewBox="0 0 16 16" width="16">
        <circle cx="10" cy="6" r="5" stroke="#fff" strokeWidth="1.300" />
        <path d="M6.500 9.500L.500 15.500" stroke="#fff" strokeWidth="1.300" />
      </svg>
    ),
  },
  {
    label: "Edge",
    running: true,
    art: (
      <svg height="24" viewBox="0 0 24 24" width="24">
        <defs>
          <linearGradient id="edge-top" x1="0" x2="1" y1="0" y2="0.300">
            <stop offset="0" stopColor="#2aa7e8" />
            <stop offset="0.600" stopColor="#36c6c9" />
            <stop offset="1" stopColor="#6fe06a" />
          </linearGradient>
        </defs>
        <circle cx="12" cy="12" fill="#1b7fd6" r="12" />
        <path d="M0 11C1 4 6 0 12 0c7 0 12 5 12 10 0 4-3 6-6 6-3 0-4-1-3.500-2C16 11 14 8 10 8 5 8 1 9 0 11z" fill="url(#edge-top)" />
        <path d="M8 12c-2 6 2 11 8 11 3-1 5-2.500 6.500-5-7 3-12-1-12-5 0-1 .5-2 1.500-3-2 0-3.500 1-4 2z" fill="#0f4f9e" />
        <path d="M14.500 14c1-1 1-3-1-4-2.500 1-3.500 4-2 6.500 2 3 6 4 11 1.500l1-3c-3 3-9 3-9-1z" fill="#38322f" />
      </svg>
    ),
  },
  {
    label: "Проводник",
    running: true,
    art: (
      <svg height="20" viewBox="0 0 22 20" width="22">
        <path d="M0 1h8l2 2h12v15H0z" fill="#e7a020" />
        <path d="M0 4h22v14H0z" fill="#fcd269" />
        <path d="M4 20v-9h14v9h-4v-5H8v5z" fill="#3b9bdd" />
      </svg>
    ),
  },
  {
    label: "Telegram",
    art: (
      <svg height="22" viewBox="0 0 22 22" width="22">
        <circle cx="11" cy="11" fill="#2b9fd9" r="11" />
        <path d="M4 10.500L17 5.500 15 16l-4-3-2 2-.8-3.200z" fill="#fff" />
        <path d="M8.200 11.800L15 7.500l-5.200 5L9 15z" fill="#b9d9ec" />
      </svg>
    ),
  },
  {
    label: "WhatsApp",
    art: (
      <svg fill="none" height="22" viewBox="0 0 22 22" width="22">
        <path d="M1 21l1.500-5A10 10 0 1111 21a10 10 0 01-5-1.300z" fill="#fff" />
        <path d="M2.800 19.200l1-3.500a8.500 8.500 0 113 2.700z" fill="#3fc351" />
        <path d="M7.500 6c-2 2-.5 5 1.500 7s5 3.500 6.500 2c1-1 .5-1.700 0-2l-2-1-1.200 1.200c-1.500-.7-2.700-1.900-3.300-3.200L10 9 9 6.500C8.700 6 8 5.700 7.500 6z" fill="#fff" />
      </svg>
    ),
  },
  {
    label: "Word",
    running: true,
    art: (
      <svg height="22" viewBox="0 0 22 22" width="22">
        <path d="M10 3h12v17H10z" fill="#fff" stroke="#2b579a" />
        <path d="M13 6.500h7M13 9h7M13 11.500h7M13 14h7M13 16.500h7" stroke="#2b579a" />
        <path d="M0 2.500L13 0v22L0 19.500z" fill="#2b579a" />
        <path d="M3 7.500l1.500 7 2-6.500 2 6.500 1.500-7" fill="none" stroke="#fff" strokeWidth="1.500" />
      </svg>
    ),
  },
  { label: "1С:Предприятие", running: true, active: true, art: <Icon name="app" size={22} /> },
];

function Taskbar() {
  return (
    <div className="flex h-[40px] shrink-0 bg-linear-to-r from-[#39312f] via-[#2c2a2a] to-[#1f2222] font-[Roboto,'Noto_Sans',sans-serif] text-white">
      <div className="flex grow gap-px pl-px">
        {apps.map(({ label, running, active, art }) => (
          <button
            aria-label={label}
            className={`relative grid w-[48px] place-items-center ${active ? "bg-[#5d5a59]" : ""}`}
            key={label}
            type="button"
          >
            {art}
            {running && (
              <span className={`absolute bottom-0 h-[2px] bg-[#8ae3d2] ${active ? "inset-x-0" : "inset-x-[4px]"}`} />
            )}
          </button>
        ))}
      </div>
      <div className="flex items-center">
        <svg fill="none" height="8" viewBox="0 0 12 8" width="12">
          <path d="M.500 6.500L6 1l5.500 5.500" stroke="#fff" strokeWidth="1.300" />
        </svg>
        <svg className="ml-[10px]" fill="none" height="12" viewBox="0 0 16 12" width="16">
          <path d="M5.500 3.500h8v7h-8zM15 5.500v3" stroke="#fff" />
          <path d="M6 5h7v5H6z" fill="#fff" />
          <path d="M1 3.500h4M1.500 1v2.500c0 2 3 2 3 0V1M3 5v5.500h2" stroke="#fff" />
        </svg>
        <svg className="ml-[10px]" fill="none" height="13" viewBox="0 0 13 13" width="13">
          <path d="M.500 12.500A12 12 0 0112.500.500" stroke="#777" />
          <path d="M3.500 12.500a9 9 0 019-9M6.500 12.500a6 6 0 016-6M9 12.500A3.500 3.500 0 0112.500 9" stroke="#fff" />
          <circle cx="11.500" cy="11.500" fill="#fff" r="1.500" />
        </svg>
        <svg className="ml-[9px]" fill="none" height="14" viewBox="0 0 16 14" width="16">
          <path d="M.500 5h3L7 1.500v11L3.500 9h-3z" stroke="#fff" />
          <path d="M9 5q1.500 2 0 4" stroke="#fff" />
          <path d="M11 3.500q3 3.500 0 7M13 2q4.500 5 0 10" stroke="#888" />
        </svg>
        <span className="ml-[11px] text-[12px]">РУС</span>
        <p className="ml-[12px] w-[56px] text-center leading-[18px]">
          <time>
            16:11
            <br />
            31.12.2020
          </time>
        </p>
        <span className="ml-[5px] h-full w-px bg-[#6b6b6b]" />
        <span className="w-[4px]" />
      </div>
    </div>
  );
}

export default function App() {
  return (
    <div className={`flex h-screen min-w-[1280px] flex-col overflow-hidden bg-[#f4f1dc] ${font}`}>
      <TitleBar />
      <TopBars />
      <div className="flex min-h-0 grow pt-px">
        <TreePanel />
        <main className="relative mr-[4px] ml-[5px] min-w-0 grow overflow-hidden border border-t-[#6e6e6e] border-r-white border-b-white border-l-[#6e6e6e] bg-[#d8d2bd]">
          <ReportWindow />
          <SchemeWindow />
        </main>
        <PropertiesPanel />
      </div>
      <WindowTabs />
      <StatusBar />
      <Taskbar />
    </div>
  );
}
